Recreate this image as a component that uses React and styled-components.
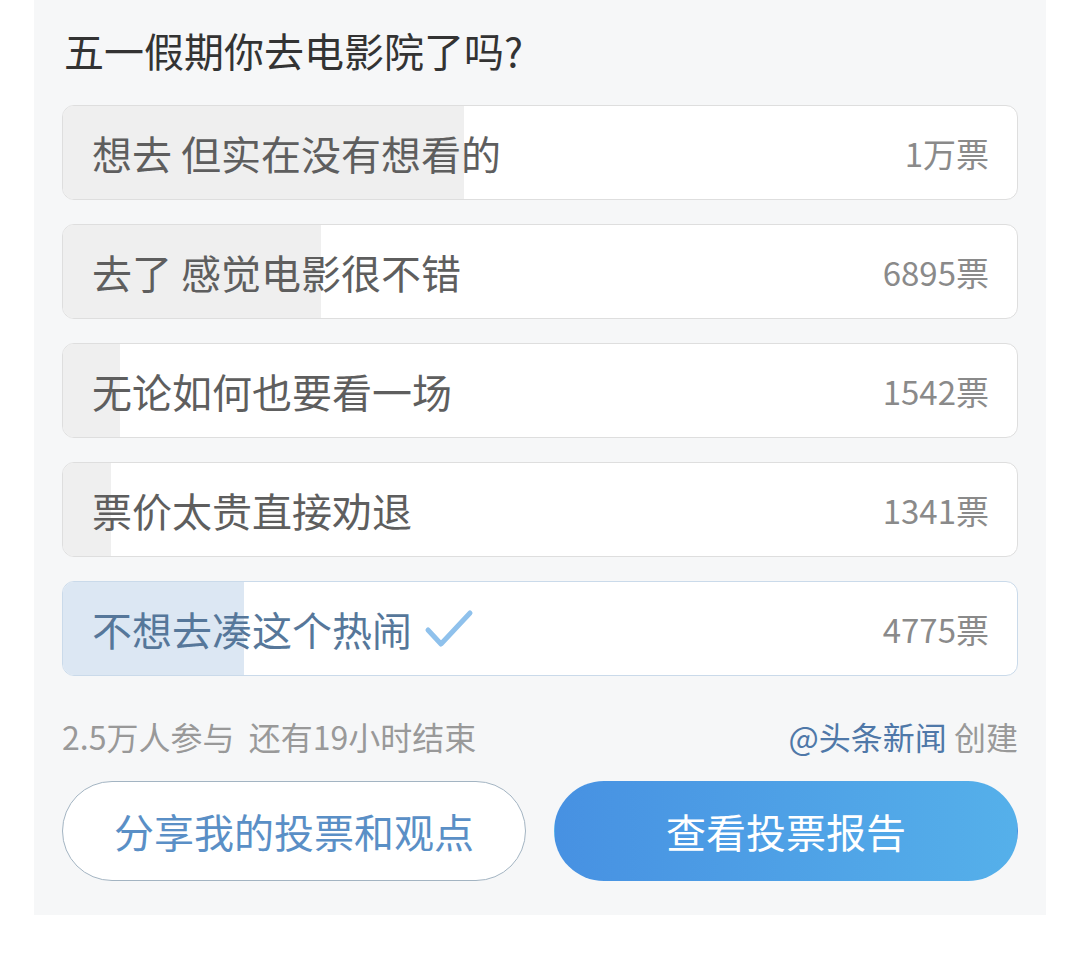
import React from 'react';
import styled, { createGlobalStyle } from 'styled-components';

const Global = createGlobalStyle`
  body {
    margin: 0;
    background: #ffffff;
    font-family: "Noto Sans CJK SC", "Noto Sans", sans-serif;
  }
`;

const Panel = styled.div`
  margin-left: 34px;
  width: 1012px;
  box-sizing: border-box;
  padding: 25px 28px 34px;
  background: #f6f7f8;
`;

const Title = styled.h1`
  margin: 0 0 30px 2px;
  font-size: 40px;
  line-height: 50px;
  font-weight: 400;
  color: #333;
`;

const Options = styled.div`
  display: flex;
  flex-direction: column;
  gap: 24px;
`;

const Option = styled.div`
  position: relative;
  height: 95px;
  box-sizing: border-box;
  border: 1.5px solid ${p => (p.chosen ? '#cadaea' : '#dedede')};
  border-radius: 12px;
  background: #ffffff;
  overflow: hidden;
  display: flex;
  align-items: center;
  padding: 0 28px 0 29px;
`;

const Fill = styled.div`
  position: absolute;
  left: 0;
  top: 0;
  bottom: 0;
  background: ${p => (p.chosen ? '#dce7f3' : '#efefef')};
`;

const Label = styled.span`
  position: relative;
  flex: 1;
  display: flex;
  align-items: center;
  gap: 12px;
  font-size: 40px;
  color: ${p => (p.chosen ? '#56779a' : '#5e5e5e')};
`;

const Count = styled.span`
  position: relative;
  font-size: 33px;
  color: #8a8a8a;
`;

const Footer = styled.div`
  display: flex;
  justify-content: space-between;
  align-items: center;
  margin-top: 40px;
  height: 40px;
  font-size: 32px;
  color: #999;
`;

const Author = styled.span`
  color: #4f78a8;
`;

const Buttons = styled.div`
  display: flex;
  gap: 28px;
  margin-top: 25px;
`;

const Pill = styled.button`
  flex: 1;
  height: 100px;
  border-radius: 50px;
  font-family: inherit;
  font-size: 40px;
  border: 1.5px solid ${p => (p.primary ? 'transparent' : '#a3b4c2')};
  background: ${p => (p.primary ? 'linear-gradient(90deg, #4791e2, #55b0ea)' : '#ffffff')};
  color: ${p => (p.primary ? '#ffffff' : '#5a8fc6')};
`;

const Check = () => (
  <svg width="50" height="42" viewBox="0 0 50 42">
    <path d="M4 22 L17 36 L46 5" fill="none" stroke="#8fc1ec" strokeWidth="5" strokeLinecap="round" strokeLinejoin="round" />
  </svg>
);

const options = [
  { text: '想去 但实在没有想看的', count: '1万票', pct: 42 },
  { text: '去了 感觉电影很不错', count: '6895票', pct: 27 },
  { text: '无论如何也要看一场', count: '1542票', pct: 6 },
  { text: '票价太贵直接劝退', count: '1341票', pct: 5 },
  { text: '不想去凑这个热闹', count: '4775票', pct: 19, chosen: true },
];

export default function App() {
  return (
    <>
      <Global />
      <Panel>
        <Title>五一假期你去电影院了吗?</Title>
        <Options>
          {options.map(o => (
            <Option key={o.text} chosen={o.chosen}>
              <Fill chosen={o.chosen} style={{ width: `${o.pct}%` }} />
              <Label chosen={o.chosen}>
                {o.text}
                {o.chosen && <Check />}
              </Label>
              <Count>{o.count}</Count>
            </Option>
          ))}
        </Options>
        <Footer>
          <span>2.5万人参与&nbsp;&nbsp;还有19小时结束</span>
          <span><Author>@头条新闻</Author> 创建</span>
        </Footer>
        <Buttons>
          <Pill>分享我的投票和观点</Pill>
          <Pill primary>查看投票报告</Pill>
        </Buttons>
      </Panel>
    </>
  );
}
